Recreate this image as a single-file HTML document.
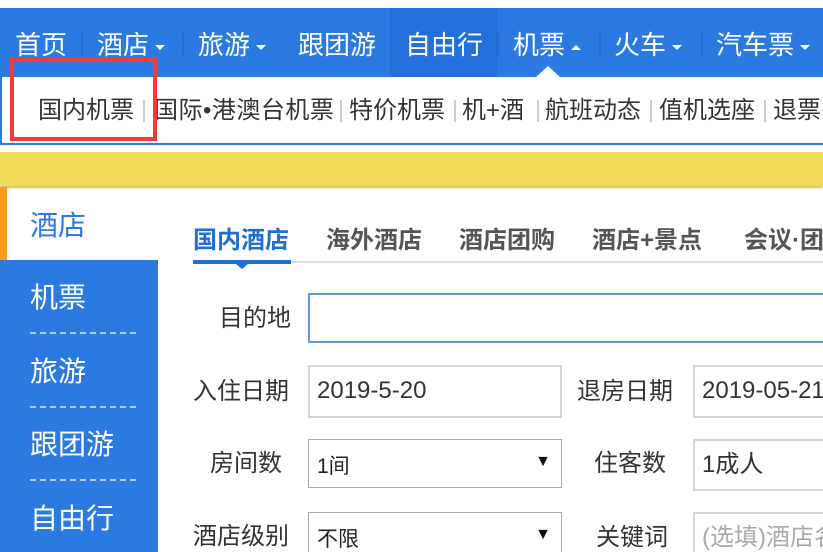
<!DOCTYPE html>
<html><head><meta charset="utf-8"><style>
*{margin:0;padding:0;box-sizing:border-box}
html,body{width:823px;height:552px;overflow:hidden}
body{background:#fff;font-family:"Liberation Sans","Noto Sans CJK SC",sans-serif;position:relative}
.a{position:absolute;white-space:nowrap}
.nav{left:0;top:8px;width:823px;height:69px;background:#2a7ae2}
.ni{color:#fff;font-size:26px;top:27px;line-height:36px}
.sep{width:2px;height:22px;background:#236dd6;top:33px}
.car{display:inline-block;width:0;height:0;border-left:5px solid transparent;border-right:5px solid transparent;border-top:5px solid #fff;vertical-align:middle;margin-left:6px}
.up{border-top:none;border-bottom:5px solid #fff}
.sub{color:#333;font-size:24px;top:95px;line-height:32px}
.ss{width:2px;height:22px;background:#ccc;top:100px}
.side{color:#fff;font-size:28px;left:30px;line-height:36px}
.dash{left:30px;width:106px;border-top:2px dashed #b0cdf2}
.tab{font-size:24px;font-weight:bold;color:#555;top:225px;line-height:32px}
.lbl{font-size:24px;color:#333;line-height:32px}
.inp{border:2px solid #d4d4d4;font-size:24px;color:#333;line-height:32px;padding:8px 7px}
.sel{border:1px solid #aaa;font-size:21px;color:#222;padding:10px 8px}
.tri{right:10px;top:13px;font-size:16px;color:#111}
</style></head><body>
<div class="a nav"></div>
<div class="a" style="left:390px;top:8px;width:107px;height:69px;background:#2370dc"></div>
<div class="a ni" style="left:15px">首页</div>
<div class="a sep" style="left:81px"></div>
<div class="a ni" style="left:97px">酒店<span class="car"></span></div>
<div class="a sep" style="left:182px"></div>
<div class="a ni" style="left:198px">旅游<span class="car"></span></div>
<div class="a ni" style="left:298px">跟团游</div>
<div class="a ni" style="left:405px">自由行</div>
<div class="a sep" style="left:497px"></div>
<div class="a ni" style="left:513px">机票<span class="car up"></span></div>
<div class="a sep" style="left:599px"></div>
<div class="a ni" style="left:614px">火车<span class="car"></span></div>
<div class="a sep" style="left:701px"></div>
<div class="a ni" style="left:716px">汽车票<span class="car"></span></div>
<div class="a" style="left:536px;top:66px;width:0;height:0;border-left:12px solid transparent;border-right:12px solid transparent;border-bottom:11px solid #fff"></div>
<div class="a" style="left:0;top:77px;width:2px;height:68px;background:#2a7ae2"></div>
<div class="a" style="left:0;top:143px;width:823px;height:2px;background:#2a7ae2"></div>
<div class="a sub" style="left:38px">国内机票</div><div class="a ss" style="left:143px"></div>
<div class="a sub" style="left:154px;letter-spacing:0.5px">国际•港澳台机票</div><div class="a ss" style="left:340px"></div>
<div class="a sub" style="left:349px">特价机票</div><div class="a ss" style="left:454px"></div>
<div class="a sub" style="left:462px">机+酒</div><div class="a ss" style="left:537px"></div>
<div class="a sub" style="left:545px">航班动态</div><div class="a ss" style="left:650px"></div>
<div class="a sub" style="left:659px">值机选座</div><div class="a ss" style="left:764px"></div>
<div class="a sub" style="left:773px">退票</div>
<div class="a" style="left:10px;top:58px;width:147px;height:83px;border:4px solid #f23a3a"></div>
<div class="a" style="left:0;top:152px;width:823px;height:34px;background:#f1d95a;box-shadow:0 2px 2px #d8c050"></div>
<div class="a" style="left:0;top:187px;width:7px;height:73px;background:#f99b1d"></div>
<div class="a" style="left:30px;top:208px;font-size:28px;color:#2a7ae2;line-height:36px">酒店</div>
<div class="a" style="left:0;top:260px;width:158px;height:292px;background:#2a7ae2"></div>
<div class="a side" style="top:280px">机票</div><div class="a dash" style="top:332px"></div>
<div class="a side" style="top:354px">旅游</div><div class="a dash" style="top:406px"></div>
<div class="a side" style="top:427px">跟团游</div><div class="a dash" style="top:479px"></div>
<div class="a side" style="top:501px">自由行</div>
<div class="a" style="left:193px;top:261px;width:630px;height:2px;background:#ddd"></div>
<div class="a" style="left:193px;top:260px;width:98px;height:4px;background:#1f6fd0"></div>
<div class="a" style="left:236px;top:264px;width:0;height:0;border-left:6px solid transparent;border-right:6px solid transparent;border-top:5px solid #1f6fd0"></div>
<div class="a tab" style="left:193px;color:#1f6fd0">国内酒店</div>
<div class="a tab" style="left:326px">海外酒店</div>
<div class="a tab" style="left:459px">酒店团购</div>
<div class="a tab" style="left:592px">酒店+景点</div>
<div class="a tab" style="left:744px">会议·团</div>
<div class="a lbl" style="left:219px;top:303px">目的地</div>
<div class="a" style="left:308px;top:293px;width:530px;height:50px;border:2px solid #5b9be0"></div>
<div class="a lbl" style="left:193px;top:376px">入住日期</div>
<div class="a inp" style="left:308px;top:365px;width:254px;height:53px">2019-5-20</div>
<div class="a lbl" style="left:577px;top:376px">退房日期</div>
<div class="a inp" style="left:693px;top:365px;width:150px;height:53px">2019-05-21</div>
<div class="a lbl" style="left:210px;top:448px">房间数</div>
<div class="a sel" style="left:308px;top:439px;width:254px;height:49px">1间<span class="a tri">▼</span></div>
<div class="a lbl" style="left:594px;top:448px">住客数</div>
<div class="a inp" style="left:693px;top:439px;width:150px;height:52px">1成人</div>
<div class="a lbl" style="left:193px;top:521px">酒店级别</div>
<div class="a sel" style="left:308px;top:512px;width:254px;height:49px">不限<span class="a tri">▼</span></div>
<div class="a lbl" style="left:596px;top:522px">关键词</div>
<div class="a inp" style="left:693px;top:512px;width:150px;height:52px;color:#aaa">(选填)酒店名</div>
</body></html>
